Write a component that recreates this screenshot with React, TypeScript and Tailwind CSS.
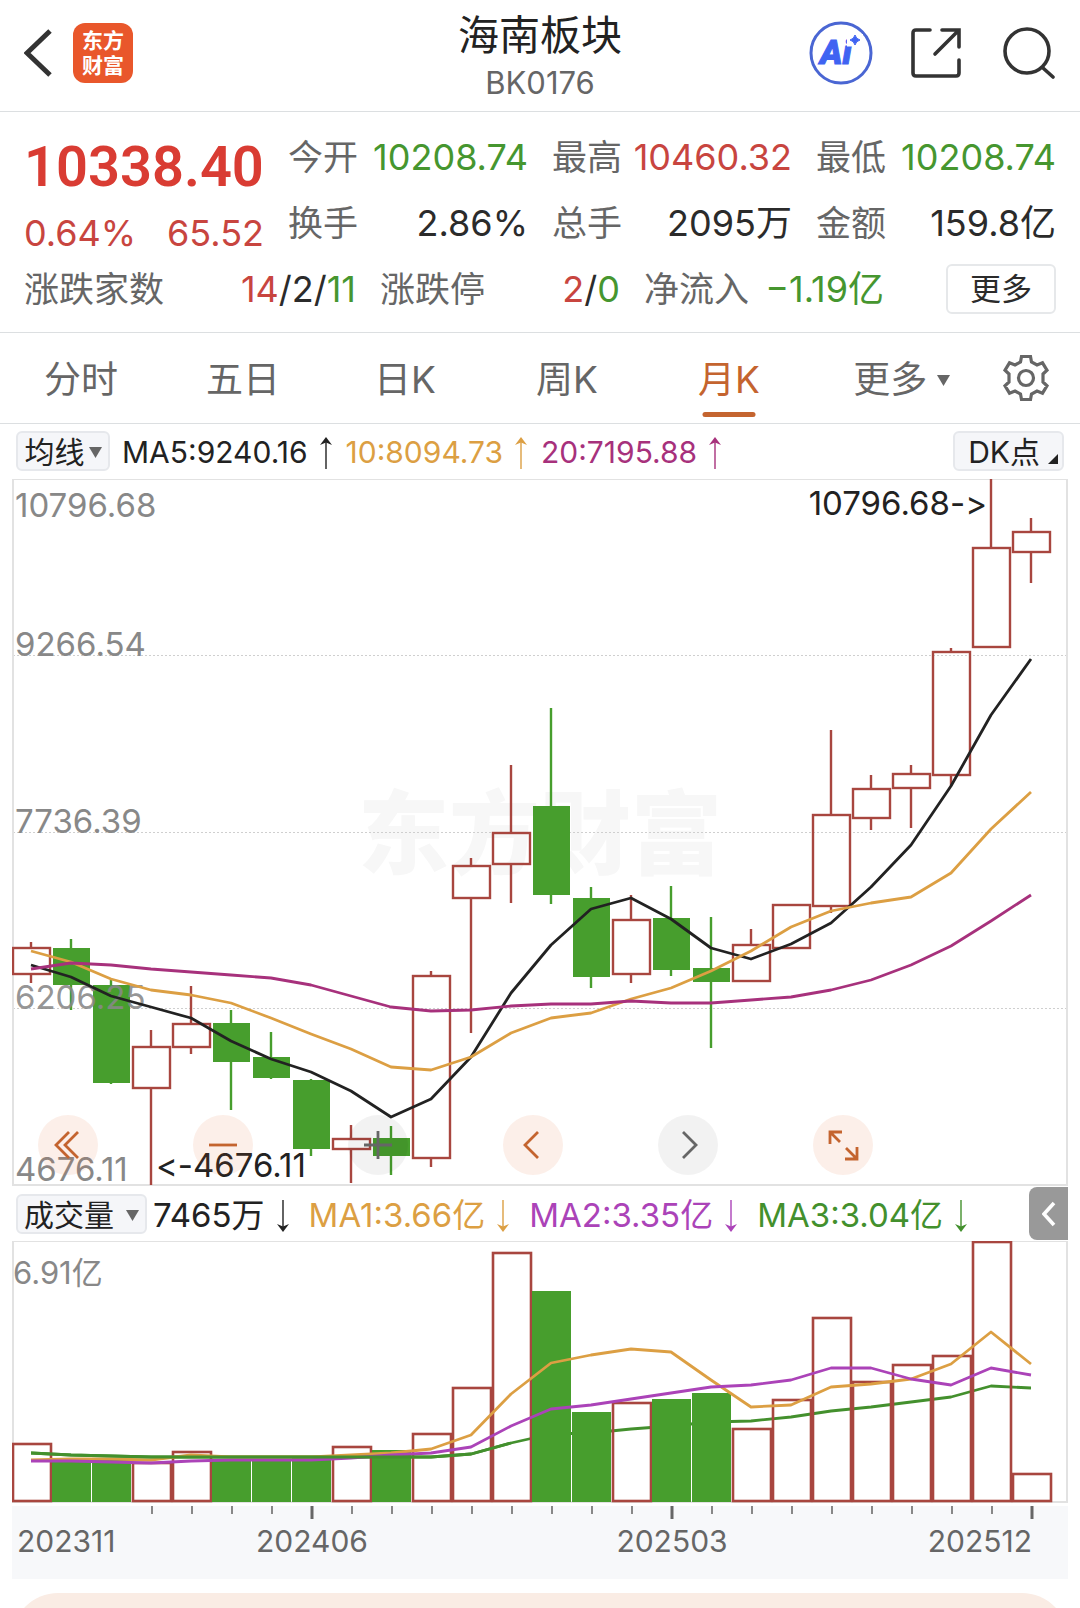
import type { ReactNode } from "react"
import clsx from "clsx"

const UP = "#a8463f"
const DOWN = "#479e2d"
const STEP = 40

// x of the middle of the n-th month
const cx = (i: number) => 19 + i * STEP

interface Candle {
    up: boolean
    high: number
    top: number
    bottom: number
    low: number
}

const candle = (up: boolean, high: number, top: number, bottom: number, low: number): Candle => ({
    up, high, top, bottom, low,
})

const CANDLES: Candle[] = [
    candle(true, 463, 468, 495, 504),
    candle(false, 460, 469, 506, 531),
    candle(false, 501, 506, 604, 605),
    candle(true, 551, 567, 609, 706),
    candle(true, 507, 544, 568, 575),
    candle(false, 531, 544, 583, 631),
    candle(false, 553, 578, 599, 600),
    candle(false, 600, 601, 670, 677),
    candle(true, 646, 659, 670, 704),
    candle(false, 647, 659, 677, 696),
    candle(true, 492, 496, 679, 688),
    candle(true, 379, 386, 419, 554),
    candle(true, 286, 353, 385, 424),
    candle(false, 229, 327, 416, 425),
    candle(false, 408, 419, 498, 509),
    candle(true, 416, 440, 495, 504),
    candle(false, 407, 439, 491, 497),
    candle(false, 438, 489, 503, 569),
    candle(true, 450, 465, 502, 502),
    candle(true, 425, 425, 469, 469),
    candle(true, 251, 335, 427, 434),
    candle(true, 296, 309, 339, 351),
    candle(true, 286, 294, 309, 349),
    candle(true, 169, 172, 296, 307),
    candle(true, 0, 68, 168, 168),
    candle(true, 39, 52, 73, 104),
]

const MA5 = [486, 498, 517, 528, 539, 562, 580, 593, 612, 638, 620, 578, 514, 466, 430, 419, 440, 469, 480, 465, 444, 408, 366, 307, 236, 180]
const MA10 = [472, 483, 500, 511, 516, 524, 539, 555, 570, 588, 591, 578, 554, 539, 534, 520, 509, 492, 472, 448, 432, 424, 418, 394, 350, 313]
const MA20 = [490, 484, 486, 490, 493, 496, 499, 506, 517, 528, 532, 531, 527, 525, 525, 522, 524, 524, 521, 518, 511, 501, 486, 467, 442, 416]

const VOLUME_TOPS = [202, 219, 217, 221, 210, 219, 218, 215, 205, 209, 192, 146, 11, 50, 171, 161, 158, 152, 187, 158, 76, 140, 123, 114, 0, 232]
const VMA1 = [219, 218, 218, 219, 214, 216, 216, 216, 214, 212, 208, 194, 153, 122, 114, 108, 111, 139, 166, 164, 146, 143, 138, 123, 91, 123]
const VMA2 = [220, 220, 221, 222, 220, 219, 219, 219, 217, 214, 212, 206, 185, 168, 164, 158, 152, 146, 144, 139, 127, 127, 138, 144, 127, 134]
const VMA3 = [212, 214, 215, 216, 216, 216, 216, 216, 216, 216, 216, 213, 202, 193, 192, 188, 185, 181, 180, 176, 170, 166, 161, 156, 145, 147]

const toPoints = (ys: number[]) => ys.map((y, i) => `${cx(i)},${y}`).join(" ")

function Line({ ys, color }: { ys: number[]; color: string }) {
    return <polyline points={toPoints(ys)} fill="none" stroke={color} strokeWidth="2.8" strokeLinejoin="round" />
}

function Caret({ className }: { className?: string }) {
    return (
        <svg viewBox="0 0 13 11" className={clsx("w-[13px] h-[11px] flex-shrink-0", className)}>
            <path d="M0 0H13L6.5 11Z" fill="#666" />
        </svg>
    )
}

function Arrow({ down }: { down?: boolean }) {
    return (
        <svg viewBox="0 0 12 34" className="w-3 h-[34px] flex-shrink-0">
            <g transform={down ? "rotate(180 6 17)" : undefined}>
                <path d="M6 3V33" stroke="currentColor" strokeWidth="1.4" />
                <path d="M6 1L12 9L6 6.5L0 9Z" fill="currentColor" />
            </g>
        </svg>
    )
}

function Stat({ label, children }: { label: string; children: ReactNode }) {
    return (
        <div className="flex items-center justify-between h-[66px] whitespace-nowrap">
            <span className="text-[35px] text-[#666]">{label}</span>
            <span className="text-[36px] text-[#2b2b2b]">{children}</span>
        </div>
    )
}

function Header() {
    return (
        <header className="grid grid-cols-[1fr_auto_1fr] items-center h-28 px-6 border-b border-[#dcdfe1]">
            <div className="flex items-center gap-5 pb-1.5">
                <button aria-label="返回">
                    <svg viewBox="0 0 29 52" className="w-[29px] h-[52px]" fill="none">
                        <path d="M26 4L3 26L26 48" stroke="#333" strokeWidth="5" />
                    </svg>
                </button>
                <a href="#" className="flex flex-col items-center justify-center w-[60px] h-[60px] rounded-xl bg-[#e9572b] text-white text-[21px] leading-[25px] font-bold">
                    <span>东方</span>
                    <span>财富</span>
                </a>
            </div>
            <div className="pt-1.5 text-center">
                <h1 className="text-[41px] leading-[48px] text-[#222]">海南板块</h1>
                <p className="text-[31px] leading-[48px] text-[#666]">BK0176</p>
            </div>
            <div className="flex items-center justify-end gap-[38px] pb-1.5 pr-px">
                <button aria-label="Ai">
                    <svg viewBox="0 0 64 64" className="w-16 h-16">
                        <circle cx="32" cy="32" r="30" fill="none" stroke="#4a66d3" strokeWidth="3" />
                        <text x="11" y="43" fontSize="34" fontWeight="900" fontStyle="italic" fill="#3f63f2" stroke="#3f63f2" strokeWidth="1" className="font-['Roboto']">Ai</text>
                        <path d="M38 13H54V25.500H38Z" fill="#fff" />
                        <path d="M46 14Q47 18 51 19Q47 20 46 24Q45 20 41 19Q45 18 46 14Z" fill="#3f63f2" stroke="#3f63f2" />
                    </svg>
                </button>
                <button aria-label="分享">
                    <svg viewBox="0 0 50 50" className="w-[50px] h-[50px]" fill="none" stroke="#333" strokeWidth="3.6" strokeLinecap="round">
                        <path d="M19 2H5Q2 2 2 5V45Q2 48 5 48H45Q48 48 48 45V32" />
                        <path d="M31 2H48V19M24 26L47 3" />
                    </svg>
                </button>
                <button aria-label="搜索" className="ml-1">
                    <svg viewBox="0 0 52 52" className="w-[52px] h-[52px]" fill="none" stroke="#333" strokeWidth="3.6" strokeLinecap="round">
                        <circle cx="24" cy="24" r="22" />
                        <path d="M40 41L50 50" />
                    </svg>
                </button>
            </div>
        </header>
    )
}

function Quote() {
    return (
        <section className="px-6 pt-3 pb-2.5 border-b border-[#dcdfe1]">
            <div className="grid grid-cols-4 gap-x-6">
                <div className="row-span-2 text-[#c8453f]">
                    <div className="flex items-center h-[86px] font-['Roboto'] text-[56px] font-semibold text-[#d93c33]">10338.40</div>
                    <div className="flex items-center justify-between h-[46px] text-[36px]">
                        <span>0.64%</span>
                        <span>65.52</span>
                    </div>
                </div>
                <Stat label="今开"><span className="text-[#46962f]">10208.74</span></Stat>
                <Stat label="最高"><span className="text-[#c8453f]">10460.32</span></Stat>
                <Stat label="最低"><span className="text-[#46962f]">10208.74</span></Stat>
                <Stat label="换手">2.86%</Stat>
                <Stat label="总手">2095万</Stat>
                <Stat label="金额">159.8亿</Stat>
            </div>
            <div className="grid grid-cols-[332fr_240fr_240fr_148fr] gap-x-6">
                <Stat label="涨跌家数">
                    <span className="text-[#c8453f]">14</span>/2/<span className="text-[#46962f]">11</span>
                </Stat>
                <Stat label="涨跌停">
                    <span className="text-[#c8453f]">2</span>/<span className="text-[#46962f]">0</span>
                </Stat>
                <Stat label="净流入"><span className="text-[#46962f]">−1.19亿</span></Stat>
                <div className="flex items-center justify-end">
                    <button className="w-[110px] h-[50px] rounded-md border-2 border-[#e6e8ea] text-[31px] text-[#2b2b2b]">更多</button>
                </div>
            </div>
        </section>
    )
}

const TABS = ["分时", "五日", "日K", "周K", "月K"]

function Tabs() {
    return (
        <nav className="flex h-[91px] border-b border-[#dcdfe1] text-[37px] text-[#666]">
            {TABS.map((tab) => (
                <button
                    key={tab}
                    className={clsx("relative w-[15%] h-full pt-1", tab === "月K" && "text-[#c4642f]")}
                >
                    {tab}
                    {tab === "月K" && (
                        <span className="absolute left-1/2 -translate-x-1/2 bottom-1.5 w-[53px] h-[5px] rounded-full bg-[#c4642f]"></span>
                    )}
                </button>
            ))}
            <button className="flex items-center justify-center gap-2.5 w-[17%] pt-1">
                更多
                <Caret />
            </button>
            <button aria-label="设置" className="flex items-center justify-center w-[6%]">
                <svg viewBox="-24 -24 48 48" className="w-12 h-12" fill="none" stroke="#666" strokeWidth="3.200">
                    <path d="M-4.5 -21.500H4.500L5.500 -16L11 -13L16.500 -15.200L21 -7.800L17 -4V4L21 7.800L16.500 15.200L11 13L5.500 16L4.500 21.500H-4.500L-5.500 16L-11 13L-16.500 15.200L-21 7.800L-17 4V-4L-21 -7.800L-16.500 -15.200L-11 -13L-5.500 -16Z" />
                    <circle r="7.500" />
                </svg>
            </button>
        </nav>
    )
}

function PriceChart() {
    return (
        <div className="relative mx-3">
            <svg viewBox="0 0 1056 707" className="block w-full h-auto [font-feature-settings:'calt'_0]" fontSize="33">
                <text x="528" y="388" textAnchor="middle" fontSize="91" fontWeight="900" fill="#f7f7f7">东方财富</text>
                <g stroke="#cfcfcf" strokeWidth="1" strokeDasharray="2 2">
                    <path d="M1 176.500H1055M1 353.500H1055M1 529.500H1055" />
                </g>
                <rect x="1" y="0" width="1054" height="706" fill="none" stroke="#e2e2e2" strokeWidth="2" />
                <g fill="#888">
                    <text x="3" y="38">10796.68</text>
                    <text x="3" y="177">9266.54</text>
                    <text x="3" y="354">7736.39</text>
                    <text x="3" y="702">4676.11</text>
                </g>
                {CANDLES.map((c, i) => {
                    const color = c.up ? UP : DOWN
                    return (
                        <g key={i} stroke={color} strokeWidth="2.4">
                            <path d={`M${cx(i)} ${c.high}V${c.top}M${cx(i)} ${c.bottom}V${c.low}`} />
                            {c.up ? (
                                <rect x={cx(i) - 18} y={c.top + 1} width="37" height={c.bottom - c.top - 1} fill="none" />
                            ) : (
                                <rect x={cx(i) - 18} y={c.top} width="37" height={c.bottom - c.top} fill={color} stroke="none" />
                            )}
                        </g>
                    )
                })}
                <text x="3" y="530" fill="#888" fillOpacity="0.9">6206.25</text>
                <Line ys={MA5} color="#222" />
                <Line ys={MA10} color="#dc9f43" />
                <Line ys={MA20} color="#a7317c" />
                <g fill="#222">
                    <text x="975" y="36" textAnchor="end">10796.68-&gt;</text>
                    <text x="144" y="698">&lt;-4676.11</text>
                </g>
            </svg>
            <div className="absolute bottom-[11px] left-[2.500%] flex gap-[95px]">
                <Tool label="最早">
                    <path d="M31 17L18 30L31 43M40 17L27 30L40 43" />
                </Tool>
                <Tool label="缩小">
                    <path d="M16 30H44" />
                </Tool>
                <Tool label="放大" muted>
                    <path d="M16 30H44M30 16V44" />
                </Tool>
                <Tool label="左移">
                    <path d="M35 17L22 30L35 43" />
                </Tool>
                <Tool label="右移" muted>
                    <path d="M25 17L38 30L25 43" />
                </Tool>
                <Tool label="全屏">
                    <path d="M29 17H17V29M17 17L27 27M32 44H44V32M44 44L33 33" />
                </Tool>
            </div>
        </div>
    )
}

function Tool({ label, muted, children }: { label: string; muted?: boolean; children: ReactNode }) {
    return (
        <button
            aria-label={label}
            className={clsx("w-[60px] h-[60px] rounded-full", muted ? "bg-black/5 text-[#666]" : "bg-[#e0622a]/10 text-[#c4642f]")}
        >
            <svg viewBox="0 0 60 60" className="w-full h-full" fill="none" stroke="currentColor" strokeWidth="2.800">
                {children}
            </svg>
        </button>
    )
}

function VolumeChart() {
    return (
        <svg viewBox="0 0 1056 262" className="block w-full h-auto">
            <rect x="1" y="0" width="1054" height="261" fill="none" stroke="#e2e2e2" strokeWidth="2" />
            <text x="1" y="43" fontSize="31" fill="#888">6.91亿</text>
            {/* the longest average runs behind the filled bars */}
            <Line ys={VMA3} color="#43902d" />
            {VOLUME_TOPS.map((top, i) =>
                CANDLES[i].up ? (
                    <rect key={i} x={1 + i * STEP} y={top + 1} width="38" height={259 - top} fill="none" stroke={UP} strokeWidth="2.600" />
                ) : (
                    <rect key={i} x={i * STEP} y={top} width="39" height={261 - top} fill={DOWN} />
                )
            )}
            <Line ys={VMA1} color="#dc9f43" />
            <Line ys={VMA2} color="#ab43b8" />
            <polyline points={toPoints(VMA3).split(" ").slice(0, 13).join(" ")} fill="none" stroke="#43902d" strokeWidth="2.800" />
        </svg>
    )
}

function TimeAxis() {
    return (
        <svg viewBox="0 0 1056 73" className="block w-full h-auto mt-[3px] bg-[#f7f8fa]" fontSize="30" fill="#666">
            {CANDLES.map((_, i) => {
                if (i < 3) return null
                const major = i === 7 || i === 16 || i === 25
                return (
                    <path key={i} d={`M${cx(i) + 1} 0V${major ? 13 : 8}`} stroke={major ? "#666" : "#888"} strokeWidth={major ? 3 : 2} />
                )
            })}
            <text x="5" y="46">202311</text>
            <text x="300" y="46" textAnchor="middle">202406</text>
            <text x="660" y="46" textAnchor="middle">202503</text>
            <text x="1020" y="46" textAnchor="end">202512</text>
        </svg>
    )
}

export default function App() {
    return (
        <main className="min-h-screen bg-white font-['Inter','Noto_Sans_CJK_SC',sans-serif]">
            <Header />
            <Quote />
            <Tabs />

            {/* moving averages */}
            <div className="flex items-center h-[55px] px-4 pb-0.5 text-[30px] whitespace-nowrap">
                <button className="flex items-center justify-center gap-1 w-[94px] h-10 pt-1 rounded-md border-2 border-[#e6e8ec] bg-[#f5f6f9] text-[30px] text-[#222]">
                    均线
                    <Caret />
                </button>
                <div className="flex items-center gap-3 pt-1 ml-3 text-[#222]">
                    MA5:9240.16
                    <Arrow />
                </div>
                <div className="flex items-center gap-3 pt-1 ml-3.5 text-[#dc9f43]">
                    10:8094.73
                    <Arrow />
                </div>
                <div className="flex items-center gap-3 pt-1 ml-3.5 text-[#a7317c]">
                    20:7195.88
                    <Arrow />
                </div>
                <button className="flex items-center justify-end gap-2 w-[111px] h-10 pt-1 pr-1 ml-auto rounded-md border-2 border-[#e6e8ec] bg-[#f5f6f9] text-[30px] text-[#222]">
                    DK点
                    <svg viewBox="0 0 10 10" className="w-2.5 h-2.5 mt-3">
                        <path d="M10 0V10H0Z" fill="#222" />
                    </svg>
                </button>
            </div>

            <PriceChart />

            {/* volume */}
            <div className="flex items-center h-[55px] pl-4 pr-3 text-[33px] whitespace-nowrap">
                <button className="flex items-center justify-center gap-3 w-[131px] h-10 pt-1 rounded-md border-2 border-[#e6e8ec] bg-[#f5f6f9] text-[30px] text-[#222]">
                    成交量
                    <Caret />
                </button>
                <div className="flex items-center gap-3 pt-1 ml-1.5 text-[#222]">
                    7465万
                    <Arrow down />
                </div>
                <div className="flex items-center gap-3 pt-1 ml-5 text-[#dc9f43]">
                    MA1:3.66亿
                    <Arrow down />
                </div>
                <div className="flex items-center gap-3 pt-1 ml-5 text-[#ab43b8]">
                    MA2:3.35亿
                    <Arrow down />
                </div>
                <div className="flex items-center gap-3 pt-1 ml-5 text-[#43902d]">
                    MA3:3.04亿
                    <Arrow down />
                </div>
                <button aria-label="展开" className="flex items-center justify-center w-[39px] h-[53px] ml-auto rounded-l-lg bg-[#999]">
                    <svg viewBox="0 0 14 26" className="w-3.5 h-[26px]" fill="none">
                        <path d="M12 2L2 13L12 24" stroke="#fff" strokeWidth="3.600" />
                    </svg>
                </button>
            </div>

            <div className="mx-3">
                <VolumeChart />
                <TimeAxis />
            </div>

            <div className="h-[15px] mt-[14px] mx-3 overflow-hidden">
                <div className="h-[92px] rounded-full bg-[#faece4]"></div>
            </div>
        </main>
    )
}
